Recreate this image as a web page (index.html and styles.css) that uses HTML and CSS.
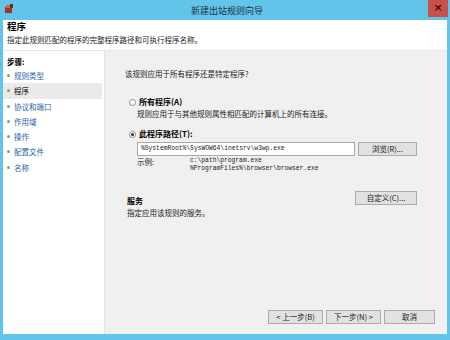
FILE: index.html
```html
<!DOCTYPE html>
<html lang="zh-CN">
<head>
    <meta charset="UTF-8">
    <title>新建出站规则向导</title>
    <link rel="stylesheet" href="styles.css">
</head>
<body>
    <div class="window">
        <div class="titlebar">
            <svg class="app-icon" width="10" height="10" viewBox="0 0 10 10">
                <rect x="1" y="3" width="7" height="6" fill="#a8341f"/>
                <rect x="2" y="1" width="5" height="3" fill="#d9604a"/>
                <rect x="6" y="0" width="3" height="4" fill="#6b2a1a"/>
            </svg>
            <span class="title">新建出站规则向导</span>
            <span class="close">&times;</span>
        </div>

        <div class="header">
            <h1>程序</h1>
            <p>指定此规则匹配的程序的完整程序路径和可执行程序名称。</p>
        </div>

        <div class="main">
            <div class="steps">
                <div class="steps-title">步骤:</div>
                <ul>
                    <li>规则类型</li>
                    <li class="active">程序</li>
                    <li>协议和端口</li>
                    <li>作用域</li>
                    <li>操作</li>
                    <li>配置文件</li>
                    <li>名称</li>
                </ul>
            </div>

            <div class="content">
                <p class="question">该规则应用于所有程序还是特定程序?</p>

                <div class="option">
                    <div class="radio-row"><span class="radio"></span><b>所有程序(A)</b></div>
                    <p class="hint">规则应用于与其他规则属性相匹配的计算机上的所有连接。</p>
                </div>

                <div class="option second">
                    <div class="radio-row"><span class="radio checked"></span><b>此程序路径(T):</b></div>
                    <div class="path-row">
                        <div class="input">%SystemRoot%\SysWOW64\inetsrv\w3wp.exe</div>
                        <button class="btn browse">浏览(R)...</button>
                    </div>
                    <div class="example">
                        <span class="example-label">示例:</span>
                        <div class="mono">c:\path\program.exe<br>%ProgramFiles%\browser\browser.exe</div>
                    </div>
                </div>

                <div class="services">
                    <div class="services-text">
                        <b>服务</b>
                        <p>指定应用该规则的服务。</p>
                    </div>
                    <button class="btn custom">自定义(C)...</button>
                </div>

                <div class="footer">
                    <button class="btn nav">&lt; 上一步(B)</button>
                    <button class="btn nav">下一步(N) &gt;</button>
                    <button class="btn cancel">取消</button>
                </div>
            </div>
        </div>
    </div>
</body>
</html>
```

FILE: styles.css
```css
body {
    margin: 0;
    font-family: "Noto Sans CJK SC", "Noto Sans", sans-serif;
    font-size: 7.5px;
    color: #1a1a1a;
}

.window {
    width: 450px;
    height: 340px;
    box-sizing: border-box;
    border: 3px solid #62c4e9;
    border-top: none;
    border-bottom-width: 6px;
    display: flex;
    flex-direction: column;
    background-color: #f0f0f0;
}

.titlebar {
    height: 20px;
    margin: 0 -3px;
    background-color: #62c4e9;
    display: flex;
    align-items: center;
    position: relative;
}

.app-icon {
    margin-left: 4px;
    margin-top: -3px;
}

.title {
    flex: 1;
    text-align: center;
    font-size: 9px;
    color: #203040;
    margin-left: -10px;
}

.close {
    position: absolute;
    right: 2px;
    top: 0;
    width: 20px;
    height: 17px;
    background-color: #c9504a;
    color: #3a1010;
    font-family: "DejaVu Sans", sans-serif;
    font-size: 11px;
    font-weight: bold;
    text-align: center;
    line-height: 16px;
}

.header {
    background-color: #ffffff;
    height: 30px;
    padding: 0 4px;
    border-bottom: 1px solid #e6e6e6;
}

.header h1 {
    margin: 0;
    padding-top: 0;
    font-size: 9.5px;
    font-weight: bold;
    line-height: 13px;
    color: #000;
}

.header p {
    margin: 2px 0 0;
    line-height: 10px;
}

.main {
    flex: 1;
    display: flex;
}

.steps {
    width: 103px;
    background-color: #ffffff;
    border-right: 1px solid #e4e4e4;
}

.steps-title {
    font-weight: bold;
    margin: 5px 0 0 4px;
    line-height: 11px;
    color: #000;
}

.steps ul {
    list-style: none;
    margin: 1px 0 0;
    padding: 0;
}

.steps li {
    height: 15.3px;
    line-height: 15.3px;
    padding-left: 11px;
    color: #2a62a8;
    position: relative;
}

.steps li::before {
    content: "";
    position: absolute;
    left: 4px;
    top: 6px;
    width: 3px;
    height: 3px;
    border-radius: 50%;
    background-color: #6fb640;
}

.steps li.active {
    background-color: #eaeaea;
    color: #000;
    margin-right: 2px;
}

.content {
    flex: 1;
    display: flex;
    flex-direction: column;
    padding-left: 20px;
    padding-right: 30px;
}

.question {
    margin: 18px 0 0;
    line-height: 10px;
}

.option {
    margin-top: 17px;
    padding-left: 4px;
}

.option.second {
    margin-top: 9px;
}

.radio-row {
    display: flex;
    align-items: center;
    line-height: 12px;
}

.radio-row b {
    font-size: 8px;
    color: #000;
}

.radio {
    width: 5px;
    height: 5px;
    border: 1px solid #8a8a8a;
    border-radius: 50%;
    background: #fff;
    margin-right: 3px;
    position: relative;
}

.radio.checked::after {
    content: "";
    position: absolute;
    left: 1px;
    top: 1px;
    width: 3px;
    height: 3px;
    border-radius: 50%;
    background-color: #333;
}

.hint {
    margin: 1px 0 0 8px;
    line-height: 10px;
}

.path-row {
    display: flex;
    align-items: center;
    margin: 2px 0 0 8px;
    gap: 3px;
}

.input {
    width: 213px;
    height: 12px;
    border: 1px solid #a9a9a9;
    background: #fff;
    font-family: "Liberation Mono", monospace;
    font-size: 6.3px;
    line-height: 12px;
    padding-left: 3px;
    box-sizing: content-box;
}

.btn {
    font-family: inherit;
    font-size: 7.5px;
    color: #1a1a1a;
    background-color: #e1e1e1;
    border: 1px solid #acacac;
    height: 14px;
    padding: 0;
    line-height: 12px;
}

.browse {
    width: 59px;
}

.example {
    display: flex;
    margin: 1px 0 0 8px;
}

.example-label {
    width: 53px;
    line-height: 10px;
}

.mono {
    font-family: "Liberation Mono", monospace;
    font-size: 6.3px;
    line-height: 7.5px;
}

.services {
    display: flex;
    justify-content: space-between;
    align-items: flex-start;
    margin-top: 22px;
    padding-left: 2px;
}

.services-text b {
    display: block;
    font-size: 8px;
    color: #000;
    line-height: 12px;
    margin-top: 1px;
}

.services-text p {
    margin: 1px 0 0;
    line-height: 10px;
}

.custom {
    width: 62px;
    margin-top: -3px;
}

.footer {
    margin-top: auto;
    margin-bottom: 10px;
    margin-right: -18px;
    display: flex;
    justify-content: flex-end;
    gap: 3px;
}

.nav {
    width: 55px;
}

.cancel {
    width: 51px;
}
```
